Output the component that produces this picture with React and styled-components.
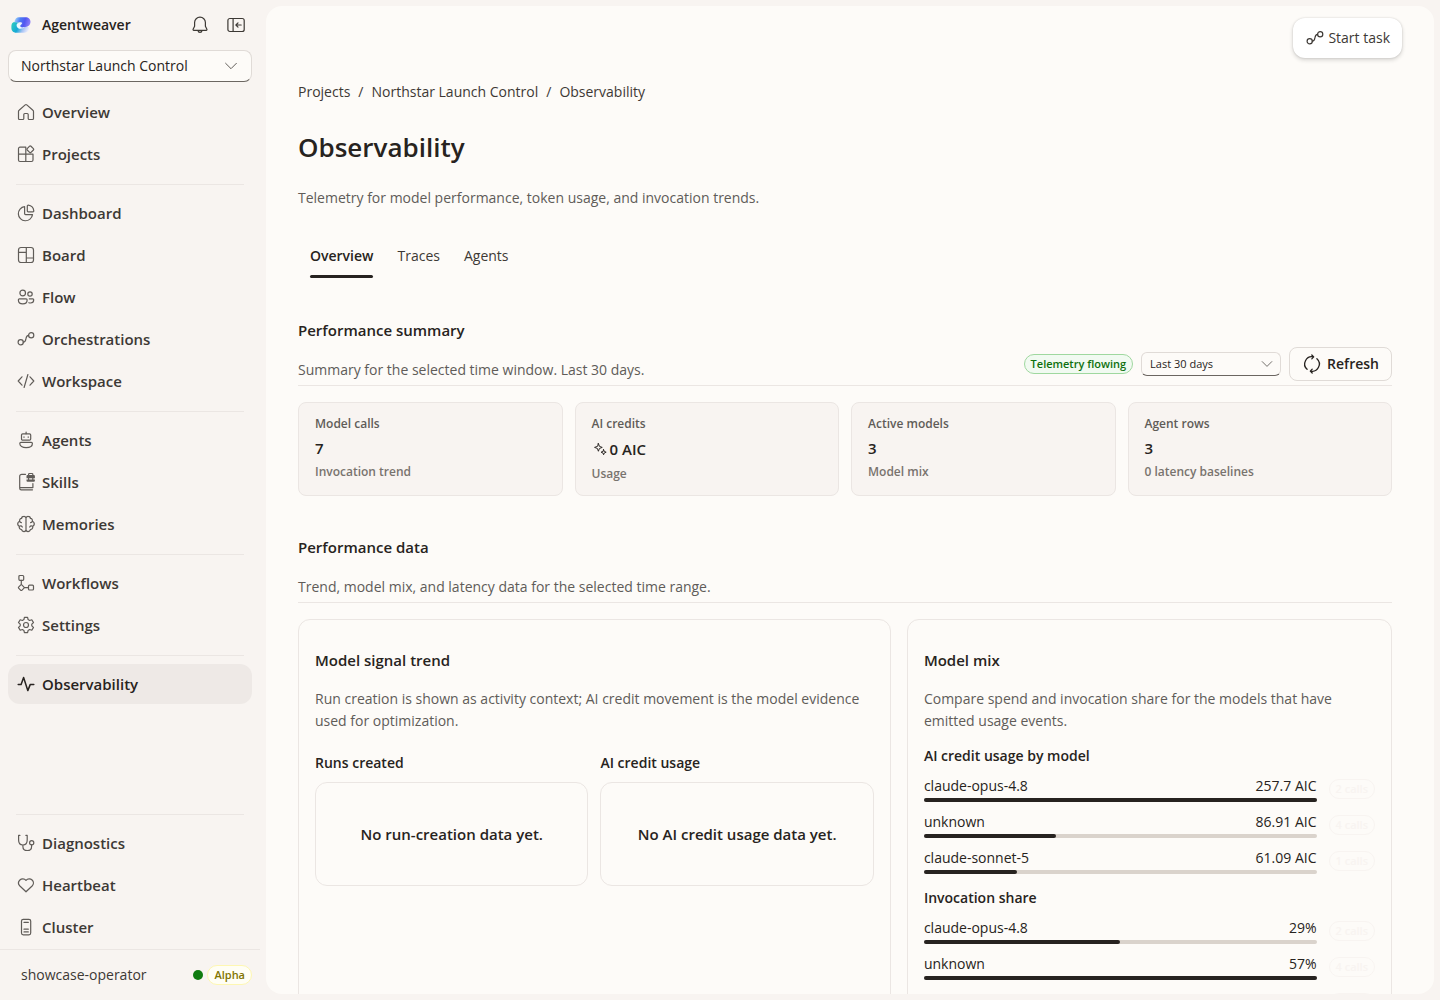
import React from "react";
import styled, { createGlobalStyle, css } from "styled-components";

const color = {
  shell: "#f8f4f1",
  surface: "#fdfbf8",
  line: "#ebe6e3",
  control: "#e0dbd7",
  active: "#eee9e6",
  ink: "#272320",
  nav: "#3d3935",
  muted: "#605c58",
  faint: "#78736e",
  track: "#dad3cc",
};

const GlobalStyle = createGlobalStyle`
  *, *::before, *::after { box-sizing: border-box; }
  body {
    margin: 0;
    background: ${color.shell};
    color: ${color.ink};
    font: 400 14px/20px "Open Sans", "Noto Sans", sans-serif;
  }
  h1, h2, h3, h4, p, ul, ol { margin: 0; padding: 0; }
  ul, ol { list-style: none; }
  button, select { font: inherit; color: inherit; }
  a { color: inherit; text-decoration: none; }
`;

/* ---------- icons ---------- */

const Glyph = styled.svg`
  flex: none;
  display: block;
  width: ${(p) => p.$size || 20}px;
  height: ${(p) => p.$size || 20}px;
  fill: none;
  stroke: currentColor;
  stroke-width: 1.2;
  stroke-linecap: round;
  stroke-linejoin: round;
`;

const drawings = {
  home: <path d="M9.2 2.9a1.2 1.2 0 0 1 1.6 0l6.1 5.3c.4.3.6.7.6 1.2v7.1a1 1 0 0 1-1 1H13.2a1 1 0 0 1-1-1v-4a1 1 0 0 0-1-1H8.800a1 1 0 0 0-1 1v4a1 1 0 0 1-1 1H3.500a1 1 0 0 1-1-1V9.400c0-.5.2-.9.6-1.200z" />,
  projects: (
    <>
      <path d="M9.800 3.200H4A1.500 1.500 0 0 0 2.500 4.700V16A1.500 1.500 0 0 0 4 17.500h11.500A1.500 1.500 0 0 0 17 16v-5.800M9.800 3.200v14.300M2.500 10.200H17" />
      <path d="M13.600 2.200a1 1 0 0 1 1.400 0l2.400 2.400a1 1 0 0 1 0 1.400L15 8.400a1 1 0 0 1-1.400 0L11.200 6a1 1 0 0 1 0-1.400z" />
    </>
  ),
  dashboard: (
    <>
      <path d="M8.600 3.600a7.100 7.100 0 1 0 7.900 8H9.600a1 1 0 0 1-1-1z" />
      <path d="M11.300 3a.8.8 0 0 1 .9-.8 6.400 6.400 0 0 1 5.600 5.700.8.8 0 0 1-.8.9h-4.900a.8.8 0 0 1-.8-.8z" />
    </>
  ),
  board: (
    <>
      <rect x="2.500" y="2.500" width="15" height="15" rx="2.500" />
      <path d="M10.300 2.500v15M2.500 7.400h7.800M10.300 13h7.200" />
    </>
  ),
  flow: (
    <>
      <circle cx="6.700" cy="6" r="2.800" />
      <circle cx="14" cy="7" r="2.200" />
      <path d="M3.400 11.800h6.700c.6 0 1 .4 1 1v.4c0 2.100-1.800 3.600-4.300 3.600s-4.400-1.500-4.400-3.600v-.4c0-.6.4-1 1-1zM13.300 11.800h3.500c.5 0 .9.4.9 1v.3c0 1.700-1.300 2.900-3.200 2.900-.6 0-1.100-.1-1.600-.3" />
    </>
  ),
  orchestrations: (
    <>
      <circle cx="4.700" cy="13.300" r="2.600" />
      <circle cx="15.200" cy="6.300" r="2.600" />
      <path d="M7.300 13.200c4.300-.2 1-6.700 5.300-6.900" />
    </>
  ),
  code: <path d="M6 5.800 2.200 10 6 14.200M14 5.800l3.800 4.200-3.800 4.200M11.900 3.500 8.100 16.500" />,
  agents: (
    <>
      <rect x="5.500" y="3.800" width="9.200" height="6.400" rx="1.200" />
      <path d="M10.100 2v1.700M8 6.900v.4M12.200 6.900v.4M4.900 12.400h10.400c.6 0 1.100.5 1.100 1.100 0 2.500-2.600 4.100-6.300 4.100s-6.300-1.600-6.300-4.100c0-.6.500-1.100 1.100-1.100z" />
    </>
  ),
  skills: (
    <>
      <path d="M9.500 2.300H5.700a2 2 0 0 0-2 2v11.900a1.600 1.600 0 0 0 1.600 1.600H16.500M3.900 15.600h13v-4" />
      <path d="M12.600 3.400V2.300a.8.8 0 0 1 .8-.8h2.600a.8.8 0 0 1 .8.800v1.100" />
      <path d="M10.500 4.100a1 1 0 0 1 1-1h6.400a1 1 0 0 1 1 1v2.200h-8.400zM10.500 7.500h8.400v1.200a1 1 0 0 1-1 1h-6.400a1 1 0 0 1-1-1z" fill="currentColor" stroke="none" />
      <path d="M12.600 6.300v1.700M16.800 6.300v1.700" />
    </>
  ),
  brain: (
    <path d="M10 3.900v12.300M10 4C9.600 2.700 8.700 2.200 7.700 2.300 6.300 2.400 5.600 3.300 5.600 4.400 4 4.400 3.300 5.800 3.700 7.200 2 8 1.500 9.200 1.800 10.500c.2.900.7 1.500 1.400 1.800-.2 1.900.8 3.100 2.300 3.200C6.300 18.200 9.500 18.300 10 16M10 4c.4-1.300 1.300-1.800 2.300-1.700 1.400.1 2.100 1 2.100 2.100 1.600 0 2.300 1.400 1.900 2.800 1.700.8 2.200 2 1.900 3.300-.2.9-.7 1.500-1.400 1.800.2 1.900-.8 3.100-2.300 3.200-.8 2.700-4 2.800-4.500.5M3.700 7.200c.3.900.9 1.300 1.700 1.400M16.300 7.200c-.3.900-.9 1.300-1.700 1.400M3.200 12.300c1-.5 2.500-.4 3.100.7M16.800 12.300c-1-.5-2.500-.4-3.100.7" />
  ),
  workflows: (
    <>
      <rect x="2.900" y="2.500" width="4.800" height="4.800" rx="1" />
      <rect x="12.500" y="12.200" width="5" height="4.800" rx="1" />
      <path d="M5.300 7.300v4.200M8.200 14.600h4.300M4.800 11.900a.7.7 0 0 1 1 0l2.200 2.200a.7.7 0 0 1 0 1l-2.200 2.200a.7.7 0 0 1-1 0l-2.200-2.200a.7.7 0 0 1 0-1z" />
    </>
  ),
  settings: (
    <>
      <circle cx="10" cy="10" r="2.500" />
      <path d="M8.400 2.400h3.200l.5 2.200 1.500.9 2.200-.7 1.700 2.800-1.700 1.500v1.800l1.700 1.500-1.700 2.800-2.200-.7-1.500.9-.5 2.200H8.400l-.5-2.200-1.500-.9-2.200.7-1.700-2.800 1.700-1.500V9.100L2.500 7.600l1.700-2.800 2.200.7 1.500-.9z" />
    </>
  ),
  pulse: <path d="M2.200 10.400h2.900l2.500-7 4.200 13.200 2.500-6.200h3.500" strokeWidth="1.500" />,
  stethoscope: (
    <>
      <path d="M3.900 2.400H2.600V7c0 3 1.700 5 4.300 5s4.300-2 4.300-5V2.400H9.900M6.900 12v1.400c0 2.400 1.800 4.100 4.400 4.100s4.300-1.700 4.300-4.100v-1.500" />
      <circle cx="15.700" cy="9.700" r="2.100" />
    </>
  ),
  heart: <path d="M10 5.400c1.700-2 4.400-2 6.100-.4 1.800 1.800 1.700 4.300 0 6L10 16.800l-6.100-5.800c-1.700-1.700-1.800-4.200 0-6 1.700-1.600 4.400-1.600 6.100.4z" />,
  cluster: (
    <>
      <rect x="5.500" y="2.300" width="9.200" height="15.500" rx="1.800" />
      <path d="M8 5.400h4.300M8 12.200h4.300M8 14.900h4.300" />
    </>
  ),
  bell: <path d="M10 2.200a5.400 5.400 0 0 0-5.400 5.400v3.700l-1.500 3c-.2.500.1 1 .6 1h12.600c.5 0 .8-.5.6-1l-1.500-3V7.600A5.400 5.400 0 0 0 10 2.200zM7.900 15.400c.2 1.200 1 2 2.100 2s1.900-.8 2.100-2" />,
  collapse: (
    <>
      <rect x="1.900" y="3.500" width="16.300" height="13" rx="2" />
      <path d="M7.100 3.500v13M15.200 10H10M12 7.900 9.900 10l2.100 2.100" />
    </>
  ),
  chevron: <path d="m4 7 6 6 6-6" strokeWidth="1.100" />,
  refresh: (
    <path
      d="M11.400 2.900A7.200 7.200 0 0 0 5.100 15.300M8.600 17.100A7.200 7.200 0 0 0 14.900 4.700M9.800 1l1.900 1.900-1.900 2M10.200 15.100l-1.900 2 1.900 1.900"
      strokeWidth="1.300"
    />
  ),
  sparkle: (
    <path d="M8 3.200 9.300 6.700 12.800 8 9.300 9.300 8 12.800 6.700 9.300 3.200 8l3.500-1.300zM14.500 10.800l.9 2.300 2.300.9-2.300.9-.9 2.300-.9-2.300-2.300-.9 2.300-.9z" />
  ),
};

const Icon = ({ name, size }) => (
  <Glyph viewBox="0 0 20 20" $size={size} aria-hidden="true">
    {drawings[name]}
  </Glyph>
);

const Logo = () => (
  <svg width="20" height="18" viewBox="0 0 20 18" aria-hidden="true">
    <defs>
      <linearGradient id="lgTop" x1="0" y1="0.200" x2="1" y2="0.400">
        <stop offset="0" stopColor="#a5d8fa" />
        <stop offset="0.350" stopColor="#4a7df3" />
        <stop offset="0.650" stopColor="#5157f0" />
        <stop offset="1" stopColor="#8f80f8" />
      </linearGradient>
      <linearGradient id="lgBottom" x1="0" y1="0.300" x2="1" y2="0.600">
        <stop offset="0" stopColor="#2cc9c0" />
        <stop offset="0.400" stopColor="#17a9d6" />
        <stop offset="0.700" stopColor="#a9c4f5" />
        <stop offset="1" stopColor="#f0effb" />
      </linearGradient>
    </defs>
    <path d="M1 7.500C3 5 5 6 7.500 6.500L13 9.500c2 1.500 5 1 5.500 3-.5 3-3 4.300-6 4.300H5.500C2 16.800.3 14.500.4 11.800.4 10 .4 8.700 1 7.500z" fill="url(#lgBottom)" />
    <path d="M8 1.200h6.500c3 0 5 2 5 4.600 0 3-2.200 5.200-5.200 5.200-2.300 0-2.800 1-4.300 1.400-1.700-.6-2-2-.6-3.600l1.900-1.900C9.500 6 6 6.200 3.300 6.600 3.800 3 5.500 1.200 8 1.200z" fill="url(#lgTop)" />
    <path d="M6.200 7.400c2.200-.6 4.200-.5 5 .3-1.600.8-2.400 2-1.700 3 .9 1 2.700.8 4.300.4-1.600 1.900-5.200 2.300-6.900.9-1.500-1.300-1.700-3.300-.7-4.600z" fill="#eefaff" />
  </svg>
);

/* ---------- shell ---------- */

const Shell = styled.div`
  display: grid;
  grid-template-columns: 260px minmax(0, 1fr);
  height: 100vh;
`;

const Sidebar = styled.aside`
  display: flex;
  flex-direction: column;
  min-height: 0;
`;

const Brand = styled.div`
  display: flex;
  align-items: center;
  height: 50px;
  padding: 0 14px 0 11px;
`;

const BrandName = styled.span`
  flex: 1;
  margin-left: 11px;
  font-weight: 600;
`;

const IconButton = styled.button`
  display: grid;
  place-items: center;
  width: 36px;
  height: 32px;
  padding: 0;
  border: 0;
  background: none;
  color: ${color.nav};
  &:last-child { width: 20px; margin: 0 0 0 8px; }
`;

const SelectBox = styled.div`
  display: grid;
  align-items: center;
  color: ${color.muted};
  & > * { grid-area: 1 / 1; }
  & > svg { justify-self: end; margin-right: ${(p) => (p.$small ? 6 : 12)}px; pointer-events: none; }
  ${(p) => (p.$small ? css`width: 140px;` : css`margin: 0 8px;`)}
`;

const Select = styled.select`
  appearance: none;
  width: 100%;
  height: ${(p) => (p.$small ? 24 : 32)}px;
  padding: 0 ${(p) => (p.$small ? 8 : 12)}px;
  border: 1px solid ${color.control};
  border-bottom-color: #6b6661;
  border-radius: ${(p) => (p.$small ? 6 : 8)}px;
  background: ${color.surface};
  color: ${color.ink};
  font-size: ${(p) => (p.$small ? 11 : 14)}px;
`;

const Nav = styled.nav`
  display: flex;
  flex-direction: column;
  gap: 2px;
  padding: 0 8px;
  ${(p) => p.$grow && css`flex: 1; padding-top: 10px;`}
  ${(p) => p.$end && css`padding-bottom: 2px;`}
`;

const NavLink = styled.a`
  display: flex;
  align-items: center;
  gap: 6px;
  height: 40px;
  padding: 0 8px;
  border-radius: 12px;
  font-size: 15px;
  font-weight: 600;
  color: ${(p) => (p.$active ? color.ink : color.nav)};
  background: ${(p) => (p.$active ? color.active : "transparent")};
  & > svg { color: ${(p) => (p.$active ? color.ink : color.muted)}; }
`;

const NavRule = styled.hr`
  width: calc(100% - 16px);
  height: 1px;
  margin: 8px 8px 6px;
  border: 0;
  background: ${color.line};
`;

const Account = styled.footer`
  display: flex;
  align-items: center;
  height: 51px;
  padding: 0 8px 0 21px;
  border-top: 1px solid ${color.line};
  color: ${color.nav};
`;

const AccountName = styled.span`
  flex: 1;
`;

const Dot = styled.span`
  width: 10px;
  height: 10px;
  margin-right: 4px;
  border-radius: 50%;
  background: #107c10;
`;

const tones = {
  warning: css`color: #817400; background: #fffef5; border-color: #fef7b2;`,
  success: css`color: #0e700e; background: #f1faf1; border-color: #9fd89f;`,
  ghost: css`color: #f8f4f1; border-color: #f8f4f1;`,
};

const Badge = styled.span`
  flex: none;
  height: 20px;
  padding: 0 6px;
  border: 1px solid;
  border-radius: 10px;
  font-size: 11px;
  line-height: 18px;
  font-weight: 600;
  white-space: nowrap;
  ${(p) => tones[p.$tone]}
`;

/* ---------- page ---------- */

const Page = styled.main`
  min-width: 0;
  margin: 6px;
  padding: 12px 32px 0;
  border-radius: 16px;
  background: ${color.surface};
  overflow: hidden;
`;

const Toolbar = styled.div`
  display: flex;
  justify-content: flex-end;
`;

const StartButton = styled.button`
  display: flex;
  align-items: center;
  gap: 3px;
  height: 40px;
  padding: 0 12px;
  border: 0;
  border-radius: 12px;
  background: #ffffff;
  color: ${color.nav};
  box-shadow: 0 0 2px rgba(0, 0, 0, 0.14), 0 2px 4px rgba(0, 0, 0, 0.16);
`;

const Content = styled.div`
  padding: 23px 10px 32px 0;
`;

const Crumbs = styled.ol`
  display: flex;
  gap: 8px;
  line-height: 22px;
  color: ${color.nav};
`;

const Title = styled.h1`
  margin: 26px 0 22px;
  font-size: 26px;
  line-height: 36px;
  font-weight: 600;
`;

const Text = styled.p`
  line-height: 22px;
  color: ${color.muted};
`;

const Tabs = styled.div`
  display: flex;
  margin: 25px 0 41px;
`;

const Tab = styled.button`
  display: flex;
  flex-direction: column;
  justify-content: space-between;
  height: 44px;
  padding: 12px 12px 0;
  border: 0;
  background: none;
  color: ${(p) => (p.$active ? color.ink : color.nav)};
  font-weight: ${(p) => (p.$active ? 600 : 400)};
  &::after {
    content: "";
    width: 100%;
    height: 3px;
    border-radius: 2px;
    background: ${(p) => (p.$active ? color.ink : "transparent")};
  }
`;

const Section = styled.section`
  margin-bottom: 40px;
`;

const SectionHead = styled.header`
  display: flex;
  justify-content: space-between;
  align-items: flex-end;
  padding-bottom: 4px;
  margin-bottom: 16px;
  border-bottom: 1px solid ${color.line};
`;

const Heading = styled.h2`
  margin-bottom: 18px;
  font-size: 15px;
  line-height: 22px;
  font-weight: 600;
`;

const Actions = styled.div`
  display: flex;
  align-items: center;
  gap: 8px;
`;

const RefreshButton = styled.button`
  display: flex;
  align-items: center;
  gap: 5px;
  height: 34px;
  padding: 0 12px;
  border: 1px solid ${color.control};
  border-radius: 8px;
  background: ${color.surface};
  font-weight: 600;
`;

const Stats = styled.div`
  display: grid;
  grid-template-columns: repeat(4, minmax(0, 1fr));
  gap: 12px;
`;

const Stat = styled.article`
  display: flex;
  flex-direction: column;
  gap: 4px;
  padding: 11px 16px;
  border: 1px solid ${color.line};
  border-radius: 8px;
  background: ${color.shell};
`;

const StatLabel = styled.span`
  font-size: 12px;
  font-weight: 600;
  color: ${(p) => (p.$faint ? color.faint : color.muted)};
`;

const StatValue = styled.strong`
  display: flex;
  align-items: center;
  gap: 2px;
  min-height: ${(p) => (p.$tall ? 22 : 20)}px;
  font-size: 15px;
  font-weight: 600;
`;

const Panels = styled.div`
  display: grid;
  grid-template-columns: minmax(0, 11fr) minmax(0, 9fr);
  gap: 16px;
`;

const Panel = styled.article`
  padding: 29px 16px 16px;
  border: 1px solid ${color.line};
  border-radius: 12px;
`;

const PanelTitle = styled.h3`
  margin-bottom: 17px;
  font-size: 15px;
  line-height: 22px;
  font-weight: 600;
`;

const Charts = styled.div`
  display: grid;
  grid-template-columns: 1fr 1fr;
  gap: 12px;
  margin-top: 20px;
`;

const ChartTitle = styled.h4`
  margin-bottom: 8px;
  font-size: 14px;
  line-height: 22px;
  font-weight: 600;
`;

const Empty = styled.div`
  display: grid;
  place-items: center;
  height: 104px;
  border: 1px solid ${color.line};
  border-radius: 12px;
  font-size: 15px;
  font-weight: 600;
`;

const Group = styled.section`
  display: flex;
  flex-direction: column;
  gap: 10px;
  margin-top: 14px;
`;

const GroupTitle = styled.h4`
  font-size: 14px;
  line-height: 20px;
  font-weight: 600;
`;

const MeterRow = styled.div`
  display: flex;
  align-items: center;
  gap: 12px;
`;

const Meter = styled.div`
  flex: 1;
`;

const MeterText = styled.div`
  display: flex;
  justify-content: space-between;
  margin-bottom: 2px;
`;

const Track = styled.div`
  height: 4px;
  border-radius: 2px;
  background: ${color.track};
`;

const Fill = styled.div`
  height: 100%;
  border-radius: 2px;
  background: ${color.ink};
`;

/* ---------- data ---------- */

const navGroups = [
  [["home", "Overview"], ["projects", "Projects"]],
  [["dashboard", "Dashboard"], ["board", "Board"], ["flow", "Flow"], ["orchestrations", "Orchestrations"], ["code", "Workspace"]],
  [["agents", "Agents"], ["skills", "Skills"], ["brain", "Memories"]],
  [["workflows", "Workflows"], ["settings", "Settings"]],
  [["pulse", "Observability"]],
];

const systemLinks = [["stethoscope", "Diagnostics"], ["heart", "Heartbeat"], ["cluster", "Cluster"]];

const stats = [
  { label: "Model calls", value: "7", note: "Invocation trend" },
  { label: "AI credits", value: "0 AIC", note: "Usage", icon: "sparkle" },
  { label: "Active models", value: "3", note: "Model mix" },
  { label: "Agent rows", value: "3", note: "0 latency baselines" },
];

const meters = [
  {
    title: "AI credit usage by model",
    rows: [
      ["claude-opus-4.8", "257.7 AIC", 100, "2 calls"],
      ["unknown", "86.91 AIC", 33.7, "4 calls"],
      ["claude-sonnet-5", "61.09 AIC", 23.7, "1 calls"],
    ],
  },
  {
    title: "Invocation share",
    rows: [
      ["claude-opus-4.8", "29%", 50, "2 calls"],
      ["unknown", "57%", 100, "4 calls"],
      ["claude-sonnet-5", "14%", 25, "1 calls"],
    ],
  },
];

const NavItem = ({ icon, label }) => (
  <NavLink href="#" $active={label === "Observability"}>
    <Icon name={icon} />
    {label}
  </NavLink>
);

export default function App() {
  return (
    <>
      <GlobalStyle />
      <Shell>
        <Sidebar>
          <Brand>
            <Logo />
            <BrandName>Agentweaver</BrandName>
            <IconButton aria-label="Notifications"><Icon name="bell" /></IconButton>
            <IconButton aria-label="Collapse sidebar"><Icon name="collapse" /></IconButton>
          </Brand>
          <SelectBox>
            <Select aria-label="Project" defaultValue="northstar">
              <option value="northstar">Northstar Launch Control</option>
            </Select>
            <Icon name="chevron" size={18} />
          </SelectBox>
          <Nav $grow aria-label="Main">
            {navGroups.map((group, i) => (
              <React.Fragment key={i}>
                {i > 0 && <NavRule />}
                {group.map(([icon, label]) => <NavItem key={label} icon={icon} label={label} />)}
              </React.Fragment>
            ))}
          </Nav>
          <Nav $end aria-label="System">
            <NavRule />
            {systemLinks.map(([icon, label]) => <NavItem key={label} icon={icon} label={label} />)}
          </Nav>
          <Account>
            <AccountName>showcase-operator</AccountName>
            <Dot />
            <Badge $tone="warning">Alpha</Badge>
          </Account>
        </Sidebar>

        <Page>
          <Toolbar>
            <StartButton><Icon name="orchestrations" />Start task</StartButton>
          </Toolbar>
          <Content>
            <Crumbs>
              <li><a href="#">Projects</a></li>
              <li aria-hidden="true">/</li>
              <li><a href="#">Northstar Launch Control</a></li>
              <li aria-hidden="true">/</li>
              <li>Observability</li>
            </Crumbs>
            <Title>Observability</Title>
            <Text>Telemetry for model performance, token usage, and invocation trends.</Text>

            <Tabs role="tablist">
              <Tab role="tab" aria-selected="true" $active>Overview</Tab>
              <Tab role="tab" aria-selected="false">Traces</Tab>
              <Tab role="tab" aria-selected="false">Agents</Tab>
            </Tabs>

            <Section>
              <SectionHead>
                <div>
                  <Heading>Performance summary</Heading>
                  <Text>Summary for the selected time window. Last 30 days.</Text>
                </div>
                <Actions>
                  <Badge $tone="success">Telemetry flowing</Badge>
                  <SelectBox $small>
                    <Select $small aria-label="Time range" defaultValue="30">
                      <option value="30">Last 30 days</option>
                    </Select>
                    <Icon name="chevron" size={16} />
                  </SelectBox>
                  <RefreshButton><Icon name="refresh" />Refresh</RefreshButton>
                </Actions>
              </SectionHead>
              <Stats>
                {stats.map((s) => (
                  <Stat key={s.label}>
                    <StatLabel>{s.label}</StatLabel>
                    <StatValue $tall={!!s.icon}>
                      {s.icon && <Icon name={s.icon} size={16} />}
                      {s.value}
                    </StatValue>
                    <StatLabel $faint>{s.note}</StatLabel>
                  </Stat>
                ))}
              </Stats>
            </Section>

            <Section>
              <SectionHead>
                <div>
                  <Heading>Performance data</Heading>
                  <Text>Trend, model mix, and latency data for the selected time range.</Text>
                </div>
              </SectionHead>
              <Panels>
                <Panel>
                  <PanelTitle>Model signal trend</PanelTitle>
                  <Text>Run creation is shown as activity context; AI credit movement is the model evidence used for optimization.</Text>
                  <Charts>
                    <div>
                      <ChartTitle>Runs created</ChartTitle>
                      <Empty>No run-creation data yet.</Empty>
                    </div>
                    <div>
                      <ChartTitle>AI credit usage</ChartTitle>
                      <Empty>No AI credit usage data yet.</Empty>
                    </div>
                  </Charts>
                </Panel>
                <Panel>
                  <PanelTitle>Model mix</PanelTitle>
                  <Text>Compare spend and invocation share for the models that have emitted usage events.</Text>
                  {meters.map((group) => (
                    <Group key={group.title}>
                      <GroupTitle>{group.title}</GroupTitle>
                      {group.rows.map(([name, value, pct, calls]) => (
                        <MeterRow key={name}>
                          <Meter>
                            <MeterText><span>{name}</span><span>{value}</span></MeterText>
                            <Track role="progressbar" aria-label={name} aria-valuenow={pct}>
                              <Fill style={{ width: `${pct}%` }} />
                            </Track>
                          </Meter>
                          <Badge $tone="ghost">{calls}</Badge>
                        </MeterRow>
                      ))}
                    </Group>
                  ))}
                </Panel>
              </Panels>
            </Section>
          </Content>
        </Page>
      </Shell>
    </>
  );
}
